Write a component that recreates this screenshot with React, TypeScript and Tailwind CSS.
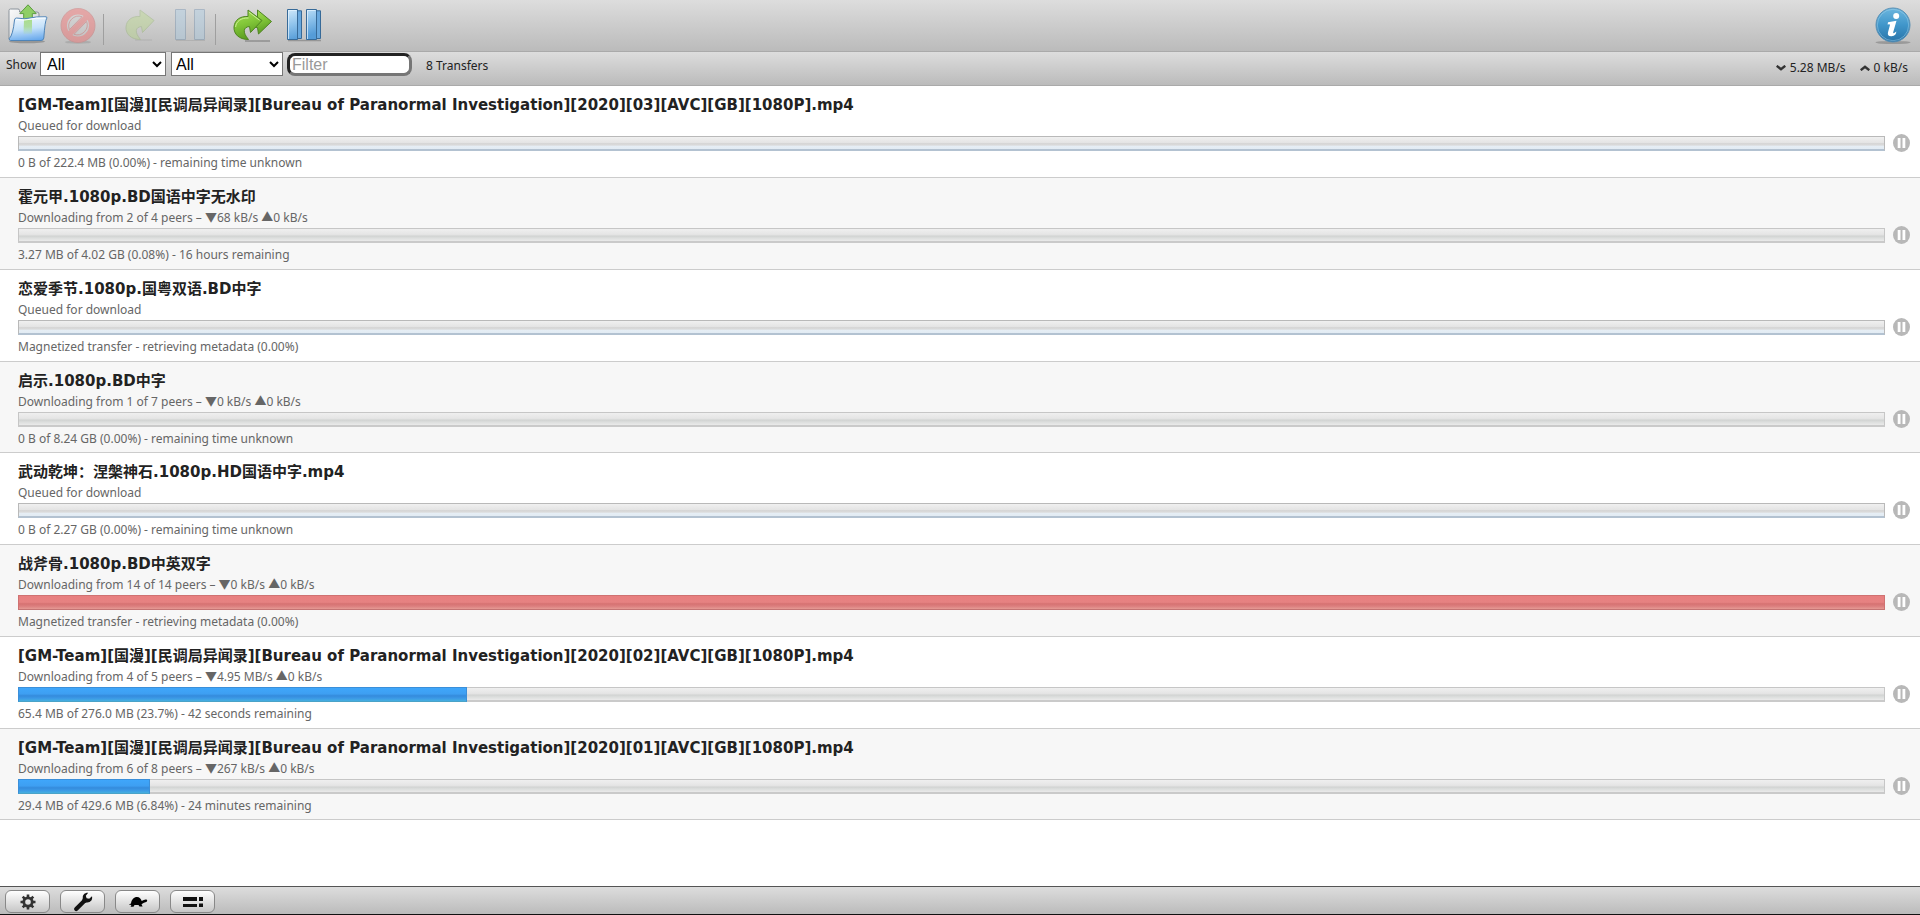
import type { ReactNode } from 'react';

type Kind = 'queued' | 'leeching' | 'magnet';

interface Torrent {
  name: string;
  peers: string;
  progress: string;
  kind: Kind;
  done: number;
}

const torrents: Torrent[] = [
  {
    name: '[GM-Team][国漫][民调局异闻录][Bureau of Paranormal Investigation][2020][03][AVC][GB][1080P].mp4',
    peers: 'Queued for download',
    progress: '0 B of 222.4 MB (0.00%) - remaining time unknown',
    kind: 'queued',
    done: 0,
  },
  {
    name: '霍元甲.1080p.BD国语中字无水印',
    peers: 'Downloading from 2 of 4 peers – ▼68 kB/s ▲0 kB/s',
    progress: '3.27 MB of 4.02 GB (0.08%) - 16 hours remaining',
    kind: 'leeching',
    done: 0,
  },
  {
    name: '恋爱季节.1080p.国粤双语.BD中字',
    peers: 'Queued for download',
    progress: 'Magnetized transfer - retrieving metadata (0.00%)',
    kind: 'queued',
    done: 0,
  },
  {
    name: '启示.1080p.BD中字',
    peers: 'Downloading from 1 of 7 peers – ▼0 kB/s ▲0 kB/s',
    progress: '0 B of 8.24 GB (0.00%) - remaining time unknown',
    kind: 'leeching',
    done: 0,
  },
  {
    name: '武动乾坤：涅槃神石.1080p.HD国语中字.mp4',
    peers: 'Queued for download',
    progress: '0 B of 2.27 GB (0.00%) - remaining time unknown',
    kind: 'queued',
    done: 0,
  },
  {
    name: '战斧骨.1080p.BD中英双字',
    peers: 'Downloading from 14 of 14 peers – ▼0 kB/s ▲0 kB/s',
    progress: 'Magnetized transfer - retrieving metadata (0.00%)',
    kind: 'magnet',
    done: 0,
  },
  {
    name: '[GM-Team][国漫][民调局异闻录][Bureau of Paranormal Investigation][2020][02][AVC][GB][1080P].mp4',
    peers: 'Downloading from 4 of 5 peers – ▼4.95 MB/s ▲0 kB/s',
    progress: '65.4 MB of 276.0 MB (23.7%) - 42 seconds remaining',
    kind: 'leeching',
    done: 24.1,
  },
  {
    name: '[GM-Team][国漫][民调局异闻录][Bureau of Paranormal Investigation][2020][01][AVC][GB][1080P].mp4',
    peers: 'Downloading from 6 of 8 peers – ▼267 kB/s ▲0 kB/s',
    progress: '29.4 MB of 429.6 MB (6.84%) - 24 minutes remaining',
    kind: 'leeching',
    done: 7.1,
  },
];

const trackStyles: Record<Kind, string> = {
  queued:
    'border-[#b9b9b9] border-b-2 border-b-[#b3c2d1] bg-[linear-gradient(#f0f0f0_0%,#e4e4e4_48%,#d6d6d6_52%,#dadada_68%,#e6eef5_76%,#e2ebf3_100%)]',
  leeching:
    'border-[#c6c6c6] border-b-2 border-b-[#cacaca] bg-[linear-gradient(#efefef_0%,#e5e5e5_45%,#d2d4d3_60%,#dcdedd_75%,#eaeaea_100%)]',
  magnet:
    'border-[#cf7272] border-b-[#c47474] bg-[linear-gradient(#e87f7f_0%,#e68282_48%,#d67272_60%,#db7e7e_78%,#e59a94_100%)]',
};

function OpenIcon() {
  return (
    <svg viewBox="0 0 40 40" className="size-10" aria-hidden="true">
      <defs>
        <linearGradient id="folderFront" x1="0.4" y1="0" x2="0.6" y2="1">
          <stop offset="0" stopColor="#eef7fe" />
          <stop offset="0.5" stopColor="#c4e1fa" />
          <stop offset="1" stopColor="#69a9ec" />
        </linearGradient>
        <linearGradient id="folderBack" x1="0" y1="0" x2="1" y2="1">
          <stop offset="0" stopColor="#fbfbfb" />
          <stop offset="1" stopColor="#c4c8cc" />
        </linearGradient>
        <linearGradient id="folderArrow" x1="0" y1="0" x2="0" y2="1">
          <stop offset="0" stopColor="#a9dd8c" />
          <stop offset="0.5" stopColor="#a5d98c" stopOpacity="0.8" />
          <stop offset="1" stopColor="#a5dc8c" stopOpacity="0.1" />
        </linearGradient>
      </defs>
      <ellipse cx="19" cy="37.5" rx="18" ry="1.8" fill="#000" opacity="0.22" />
      <path d="M1 6.500Q1 5 2.500 5H10Q11.500 5 11.500 6.500V8H29Q31 8 31 10V35H1Z" fill="url(#folderBack)" stroke="#8b939b" />
      <path d="M20 .8 28.200 9.600H24.300V17H15.700V9.600H11.800Z" fill="#8fce66" stroke="#5d9c40" strokeWidth="1" strokeLinejoin="round" />
      <path d="M8.500 14Q17 15.500 22 14T38 12.800Q39.200 12.800 38.800 14.200Q37 16.500 35.800 34Q35.500 36.500 33 36.500H2.500Q.9 36.500 1.300 34.500Q5 31 6.500 16Q6.800 14 8.500 14Z" fill="url(#folderFront)" stroke="#4e84b8" strokeWidth="1" />
      <path d="M16 15.500H24V30H15.500Z" fill="url(#folderArrow)" />
      <path d="M8.300 15.500Q17 16.800 22 15.300T37.400 14" fill="none" stroke="#fff" strokeOpacity="0.9" />
    </svg>
  );
}

function RemoveIcon() {
  return (
    <svg viewBox="0 0 36 36" className="size-9 opacity-35" aria-hidden="true">
      <ellipse cx="18" cy="34.200" rx="13" ry="1.600" fill="#000" opacity="0.3" />
      <circle cx="18" cy="17.500" r="14" fill="none" stroke="#ff5252" strokeWidth="6" />
      <path d="M8.500 27 27.500 8" stroke="#ff5252" strokeWidth="5.500" />
      <circle cx="18" cy="17.500" r="17" fill="none" stroke="#cc4444" strokeWidth="0.900" />
      <path d="M9.400 21.700A10 10 0 0 1 22 8.700ZM26.600 13.400A10 10 0 0 1 14 26.300Z" fill="none" stroke="#cc4444" strokeWidth="0.900" />
    </svg>
  );
}

const arrowPath =
  'M15 1 29 11.500 17.500 23.500 16.500 17.500C10.500 18 9 23 15.500 30.500C6 30.500 .6 25 1 18C1.600 11 7 7 15 7.500Z';

function ResumeIcon() {
  return (
    <svg viewBox="0 0 30 32" className="h-8 w-[30px] opacity-30" aria-hidden="true">
      <path d="M10 31H27" stroke="#888" strokeWidth="1" />
      <path d={arrowPath} fill="#b0dc6c" stroke="#7fa94c" strokeLinejoin="round" />
    </svg>
  );
}

function ResumeAllIcon() {
  return (
    <svg viewBox="0 0 40 33" className="h-[33px] w-10" aria-hidden="true">
      <defs>
        <linearGradient id="arrowGreen" x1="0" y1="0" x2="0.300" y2="1">
          <stop offset="0" stopColor="#a6dc58" />
          <stop offset="0.500" stopColor="#84c83a" />
          <stop offset="1" stopColor="#5c9e22" />
        </linearGradient>
      </defs>
      <path d="M12 32H37" stroke="#777" strokeWidth="2" opacity="0.500" />
      <path d="M24.500 1 38.500 12.500 25.500 25 24.500 18.500 20 18 21 8.500H24.500Z" fill="url(#arrowGreen)" stroke="#4f8422" strokeLinejoin="round" />
      <path d={arrowPath} fill="url(#arrowGreen)" stroke="#4f8422" strokeLinejoin="round" />
      <path d="M16 3.200 26.500 11.200M15.500 9C8 8.600 3 12.500 2.600 18" fill="none" stroke="#d4f3a0" strokeWidth="1" opacity="0.900" />
    </svg>
  );
}

function PauseIcon() {
  return (
    <svg viewBox="0 0 31 32" className="h-8 w-[31px] opacity-30" aria-hidden="true">
      <path d="M.5 .5H10.500V30.500H.5ZM19.500 .5H29.500V30.500H19.500Z" fill="#9ccbee" stroke="#44719c" />
      <path d="M1 31.500H30" stroke="#555" strokeWidth="1" opacity="0.500" />
    </svg>
  );
}

function PauseAllIcon() {
  return (
    <svg viewBox="0 0 35 33" className="h-[33px] w-[35px]" aria-hidden="true">
      <defs>
        <linearGradient id="pauseBlue" x1="0" y1="0" x2="0.300" y2="1">
          <stop offset="0" stopColor="#cfe8fa" />
          <stop offset="0.500" stopColor="#90c4ec" />
          <stop offset="1" stopColor="#559cd8" />
        </linearGradient>
      </defs>
      <path d="M1 31.500H34" stroke="#333" strokeWidth="1.500" opacity="0.300" />
      <path d="M5 1.800H14.500V29.500H5ZM24 1.800H33.500V29.500H24Z" fill="#68a8de" stroke="#376a98" />
      <path d="M.5 .5H10.500V30.500H.5ZM19.500 .5H29.500V30.500H19.500Z" fill="url(#pauseBlue)" stroke="#376a98" />
      <path d="M1.500 30V1.500H9.500M20.500 30V1.500H28.500" fill="none" stroke="#e8f5ff" opacity="0.700" />
    </svg>
  );
}

function InfoIcon() {
  return (
    <svg viewBox="0 0 36 38" className="h-[38px] w-9" aria-hidden="true">
      <defs>
        <linearGradient id="infoBlue" x1="0" y1="0" x2="0" y2="1">
          <stop offset="0" stopColor="#6cb6de" />
          <stop offset="0.500" stopColor="#4096ca" />
          <stop offset="1" stopColor="#2873a8" />
        </linearGradient>
      </defs>
      <ellipse cx="18" cy="35.500" rx="17.500" ry="1.600" fill="#000" opacity="0.200" />
      <circle cx="18" cy="18" r="17" fill="url(#infoBlue)" stroke="#5a90b4" />
      <circle cx="18" cy="18" r="15.700" fill="none" stroke="#a9d5ec" opacity="0.450" />
      <circle cx="21.200" cy="9" r="3" fill="#fff" />
      <path d="M13 15.200 21.500 13.800 18.200 25.200Q18 26.600 19.200 26.100L21.300 24.600Q21.500 28.800 16.500 29.200Q12 29.400 13 25.200L15 18Q15.200 16.900 12.600 17.500Z" fill="#fff" />
    </svg>
  );
}

function ToolButton({ label, className, disabled, children }: { label: string; className: string; disabled?: boolean; children: ReactNode }) {
  return (
    <button type="button" aria-label={label} disabled={disabled} className={`flex shrink-0 ${className}`}>
      {children}
    </button>
  );
}

function Separator() {
  return <span className="mt-[14px] h-[31px] w-px shrink-0 bg-[#9f9f9f]" />;
}

function GearIcon() {
  return (
    <svg viewBox="0 0 16 16" className="size-4" aria-hidden="true">
      <g stroke="#333" strokeWidth="2.600">
        <path d="M8 .5V4M8 12V15.500M.5 8H4M12 8H15.500M2.700 2.700 5.200 5.200M10.800 10.800 13.300 13.300M13.300 2.700 10.800 5.200M5.200 10.800 2.700 13.300" />
      </g>
      <circle cx="8" cy="8" r="4.200" fill="none" stroke="#333" strokeWidth="2.800" />
    </svg>
  );
}

function WrenchIcon() {
  return (
    <svg viewBox="0 0 20 20" className="size-5" aria-hidden="true">
      <path d="M3.200 17 11.500 8.800" stroke="#111" strokeWidth="4.200" strokeLinecap="round" />
      <path d="M15.200 .8 12.800 3.800 13.600 6.300 16.200 6.800 19 4.300C19.800 8 17.500 10.600 14 10.400L11 11 9 9 9.800 6C9.500 2.800 11.800 .6 15.200 .8Z" fill="#111" />
    </svg>
  );
}

function TurtleIcon() {
  return (
    <svg viewBox="0 0 20 12" className="h-3 w-5" aria-hidden="true">
      <path d="M.8 8.600 3 7.500C3.500 3.500 6 1 9 1C11.500 1 13 3 13.700 5L15.800 4C17.500 3 19.300 3.400 19.200 4.700C19 6.300 16.500 6.200 14.300 7.700L13.500 8.300 14.600 10.500H11.500L10.500 9H6.500L5.500 10.800H2.600L3.400 8.900Z" fill="#000" />
    </svg>
  );
}

function CompactIcon() {
  return (
    <svg viewBox="0 0 20 12" className="h-3 w-5" aria-hidden="true">
      <path d="M0 1H14V5H0ZM16 1H20V5H16ZM0 8H14V11H0ZM16 7.500H20V11H16Z" fill="#111" />
    </svg>
  );
}

function FooterButton({ label, children }: { label: string; children: ReactNode }) {
  return (
    <button
      type="button"
      aria-label={label}
      className="flex h-[23px] w-[45px] items-center justify-center rounded-md border border-[#888] bg-linear-to-b from-white to-[#c6c6c6]"
    >
      {children}
    </button>
  );
}

function TorrentRow({ torrent }: { torrent: Torrent }) {
  return (
    <li className="flex items-start gap-2 border-b border-[#ccc] pt-2 pr-[10px] pb-[2px] pl-[18px] even:bg-[#f7f7f7] nth-[4n]:pb-px">
      <div className="min-w-0 grow">
        <h2 className="truncate font-['DejaVu_Sans','Noto_Sans_CJK_SC',sans-serif] text-[15px] leading-[22px] font-bold text-[#222]">
          {torrent.name}
        </h2>
        <p className="truncate leading-5">{torrent.peers}</p>
        <div
          role="progressbar"
          aria-label={torrent.name}
          aria-valuenow={torrent.done}
          className={`relative h-[15px] border ${trackStyles[torrent.kind]}`}
        >
          {torrent.done > 0 && (
            <div
              className="absolute -top-px -left-px h-[15px] border border-[#3b8fd9] border-b-[#4aa3c8] bg-[linear-gradient(#3fa6fa_0%,#3e9ff2_45%,#348bdc_60%,#3b98e6_78%,#45afe0_100%)]"
              style={{ width: `${torrent.done}%` }}
            />
          )}
        </div>
        <p className="truncate leading-6">{torrent.progress}</p>
      </div>
      <button type="button" aria-label="Pause" className="mt-10 shrink-0">
        <svg viewBox="0 0 17 18" className="h-[18px] w-[17px]" aria-hidden="true">
          <ellipse cx="8.500" cy="9" rx="8.500" ry="9" fill="#b8b8b8" />
          <path d="M4.700 4H7.500V14H4.700ZM9.500 4H12.300V14H9.500Z" fill="#fff" />
        </svg>
      </button>
    </li>
  );
}

export default function App() {
  return (
    <div className="flex h-screen flex-col bg-white font-['Noto_Sans','Noto_Sans_CJK_SC',sans-serif] text-xs text-[#666]">
      <header className="text-[#222]">
        <div className="flex h-[52px] items-start border-b border-[#aaa] bg-linear-to-b from-[#ddd] to-[#bbb] pr-[9px] pl-2">
          <ToolButton label="Open torrent" className="mt-1"><OpenIcon /></ToolButton>
          <ToolButton label="Remove selected" disabled className="mt-2 mr-[7px] ml-3"><RemoveIcon /></ToolButton>
          <Separator />
          <ToolButton label="Start selected" disabled className="mt-[9px] mr-5 ml-[21px]"><ResumeIcon /></ToolButton>
          <ToolButton label="Pause selected" disabled className="mt-[9px] mr-[9px]"><PauseIcon /></ToolButton>
          <Separator />
          <ToolButton label="Start all" className="mt-[9px] mr-[14px] ml-[17px]"><ResumeAllIcon /></ToolButton>
          <ToolButton label="Pause all" className="mt-[9px]"><PauseAllIcon /></ToolButton>
          <span className="grow" />
          <ToolButton label="Inspector" className="mt-[7px]"><InfoIcon /></ToolButton>
        </div>
        <div className="flex h-[34px] items-start border-b border-[#aaa] bg-linear-to-b from-[#ddd] to-[#bbb] pr-3 pl-[6px]">
          <label htmlFor="filter-mode" className="w-[34px] leading-[26px]">Show</label>
          <select id="filter-mode" className="h-6 w-[126px] border border-[#767676] bg-white pl-[2px] font-['Liberation_Sans',sans-serif] text-base text-black">
            <option>All</option>
          </select>
          <select aria-label="Tracker" className="ml-[5px] h-6 w-[112px] border border-[#767676] bg-white font-['Liberation_Sans',sans-serif] text-base text-black">
            <option>All</option>
          </select>
          <input
            type="search"
            aria-label="Filter"
            placeholder="Filter"
            className="mt-px ml-1 h-[23px] w-[125px] rounded-lg border-[3px] border-t-[#222] border-r-[#767676] border-b-[#767676] border-l-[#222] bg-white px-[2px] font-['Liberation_Sans',sans-serif] text-base leading-4 text-black placeholder:text-[#999]"
          />
          <span className="ml-[14px] leading-7">8 Transfers</span>
          <span className="grow" />
          <span className="flex items-center gap-1 leading-8">
            <svg viewBox="0 0 10 6" className="h-[6px] w-[10px]" aria-hidden="true"><path d="M.7 .8 5 4.300 9.300 .8" fill="none" stroke="#333" strokeWidth="2.400" /></svg>
            5.28 MB/s
          </span>
          <span className="ml-[14px] flex items-center gap-1 leading-8">
            <svg viewBox="0 0 10 6" className="h-[6px] w-[10px]" aria-hidden="true"><path d="M.7 5.200 5 1.700 9.300 5.200" fill="none" stroke="#333" strokeWidth="2.400" /></svg>
            0 kB/s
          </span>
        </div>
      </header>
      <main className="min-h-0 grow overflow-y-auto">
        <ul>
          {torrents.map((torrent) => (
            <TorrentRow key={torrent.name} torrent={torrent} />
          ))}
        </ul>
      </main>
      <footer className="flex shrink-0 gap-[10px] border-t border-b border-t-[#555] border-b-[#111] bg-linear-to-b from-[#ddd] to-[#bbb] px-[5px] pt-[3px] pb-px">
        <FooterButton label="Settings menu"><GearIcon /></FooterButton>
        <FooterButton label="Preferences"><WrenchIcon /></FooterButton>
        <FooterButton label="Alternative speed limits"><TurtleIcon /></FooterButton>
        <FooterButton label="Compact view"><CompactIcon /></FooterButton>
      </footer>
    </div>
  );
}
